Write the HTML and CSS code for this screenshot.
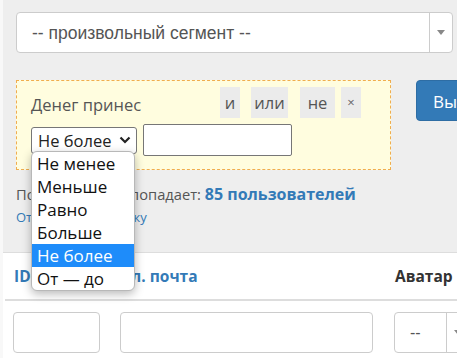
FILE: index.html
```html
<!DOCTYPE html>
<html lang="ru">
<head>
<meta charset="utf-8">
<title>Сегмент</title>
<link rel="stylesheet" href="styles.css">
</head>
<body>
<div class="panel">
  <div class="chosen">
    <span class="chosen-text">-- произвольный сегмент --</span>
    <span class="chosen-arrow"><svg width="8" height="5" viewBox="0 0 8 5"><path d="M0 0h8L4 5z" fill="#888"/></svg></span>
  </div>
  <div class="filter-row">
    <div class="cond">
      <div class="cond-top">
        <span class="cond-label">Денег принес</span>
        <div class="ops">
          <span class="op op-i">и</span>
          <span class="op op-or">или</span>
          <span class="op op-not">не</span>
          <span class="op op-x">×</span>
        </div>
      </div>
      <div class="cond-bottom">
        <div class="sel"><span>Не более</span><svg width="12" height="8" viewBox="0 0 12 8"><path d="M1.5 1.5L6 6l4.5-4.5" fill="none" stroke="#222" stroke-width="2.2"/></svg></div>
        <div class="num"></div>
      </div>
      <ul class="dropdown">
        <li>Не менее</li>
        <li>Меньше</li>
        <li>Равно</li>
        <li>Больше</li>
        <li class="active">Не более</li>
        <li>От — до</li>
      </ul>
    </div>
    <span class="apply">Выбрать</span>
  </div>
  <p class="count">Пользователей попадает: <b>85 пользователей</b></p>
  <a class="link">Отправить рассылку</a>
</div>
<div class="table">
  <div class="thead">
    <div class="th link-th">ID</div>
    <div class="th link-th">Эл. почта</div>
    <div class="th">Аватар</div>
  </div>
  <div class="filters">
    <div class="cell"><div class="field f-id"></div></div>
    <div class="cell"><div class="field f-mail"></div></div>
    <div class="cell">
      <div class="mini-chosen"><span class="mc-text">--</span><span class="chosen-arrow"><svg width="8" height="5" viewBox="0 0 8 5"><path d="M0 0h8L4 5z" fill="#888"/></svg></span></div>
    </div>
  </div>
</div>
</body>
</html>
```

FILE: styles.css
```css
html, body {
  margin: 0;
  overflow: hidden;
}
body {
  background: #f8f8f8;
  font-family: "Open Sans", "Noto Sans", sans-serif;
  font-size: 16px;
  color: #555;
  width: 457px;
  height: 358px;
}
.panel {
  margin-left: 3px;
  background: #eee;
  padding: 12px 0 0 13px;
  height: 240px;
  border-bottom: 1px solid #ddd;
}
.chosen {
  width: 437px;
  height: 41px;
  box-sizing: border-box;
  border: 1px solid #ccc;
  border-radius: 4px;
  background: #fff;
  display: flex;
  align-items: center;
  font-family: "Liberation Sans", Arial, sans-serif;
  font-size: 17.5px;
  color: #555;
}
.chosen-text {
  flex: 1;
  padding-left: 15px;
  padding-top: 2px;
}
.chosen-arrow {
  width: 22px;
  align-self: stretch;
  border-left: 1px solid #ccc;
  display: flex;
  align-items: center;
  justify-content: center;
}
.filter-row {
  display: flex;
  align-items: flex-start;
  gap: 25px;
  margin-top: 27px;
  white-space: nowrap;
}
.cond {
  position: relative;
  flex: 0 0 375px;
  box-sizing: border-box;
  border: 1px dashed #f0ad4e;
  background: #fffddf;
  padding: 6px 29px 13px 14px;
}
.cond-top {
  display: flex;
  align-items: center;
  height: 31px;
}
.cond-label {
  padding-top: 3px;
  font-size: 16.5px;
  color: #555;
}
.ops {
  margin-left: auto;
  display: flex;
}
.op {
  height: 31px;
  line-height: 31px;
  background: #ebebeb;
  text-align: center;
  color: #555;
  font-size: 16.5px;
}
.op-i { width: 20px; }
.op-or { width: 37px; margin-left: 11px; }
.op-not { width: 35px; margin-left: 12px; }
.op-x {
  width: 20px;
  margin-left: 6px;
  font-size: 13px;
  color: #666;
}
.cond-bottom {
  display: flex;
  align-items: center;
  gap: 6px;
  margin-top: 6px;
}
.sel {
  width: 106px;
  height: 27px;
  box-sizing: border-box;
  border: 1px solid #767676;
  border-radius: 3px;
  background: #fff;
  color: #222;
  font-size: 16.5px;
  display: flex;
  align-items: center;
  justify-content: space-between;
  padding: 0 5px 0 6px;
}
.num {
  width: 149px;
  height: 32px;
  box-sizing: border-box;
  border: 1px solid #767676;
  border-radius: 2px;
  background: #fff;
}
.dropdown {
  position: absolute;
  left: 14px;
  top: 70px;
  width: 104px;
  box-sizing: border-box;
  margin: 0;
  padding: 0;
  list-style: none;
  background: #fff;
  border: 1px solid #b8b8b8;
  border-radius: 6px;
  box-shadow: 0 3px 10px rgba(0, 0, 0, 0.28);
  overflow: hidden;
  z-index: 5;
}
.dropdown li {
  height: 23px;
  line-height: 23px;
  padding-left: 5px;
  font-size: 17px;
  color: #111;
}
.dropdown li.active {
  background: #1e8cfa;
  color: #fff;
}
.apply {
  flex-shrink: 0;
  height: 41px;
  line-height: 41px;
  box-sizing: border-box;
  padding: 0 16px;
  background: #337ab7;
  border: 1px solid #2e6da4;
  border-radius: 4px;
  color: #fff;
  font-size: 17px;
}
.count {
  margin: 13px 0 0;
  line-height: 22px;
  font-size: 14.7px;
  color: #555;
}
.count b {
  font-size: 16px;
  color: #337ab7;
}
.link {
  display: block;
  margin-top: 4px;
  font-size: 13px;
  line-height: 17px;
  color: #337ab7;
}
.table {
  margin-left: 3px;
  background: #fff;
  padding-left: 2px;
  height: 105px;
}
.thead, .filters {
  display: grid;
  grid-template-columns: 107px 274px 100px;
}
.thead {
  height: 46px;
  border-bottom: 2px solid #ddd;
  align-items: center;
}
.th {
  padding-left: 9px;
  font-weight: bold;
  font-size: 15.5px;
  color: #333;
}
.link-th {
  color: #337ab7;
}
.cell {
  padding: 11px 0 0 8px;
}
.field {
  height: 41px;
  box-sizing: border-box;
  border: 1px solid #ccc;
  border-radius: 4px;
}
.f-id { width: 87px; }
.f-mail { width: 253px; }
.mini-chosen {
  width: 76px;
  height: 41px;
  box-sizing: border-box;
  border: 1px solid #ccc;
  border-radius: 4px;
  display: flex;
  align-items: center;
  font-family: "Liberation Sans", Arial, sans-serif;
  color: #555;
}
.mc-text {
  flex: 1;
  padding-left: 15px;
}
```
